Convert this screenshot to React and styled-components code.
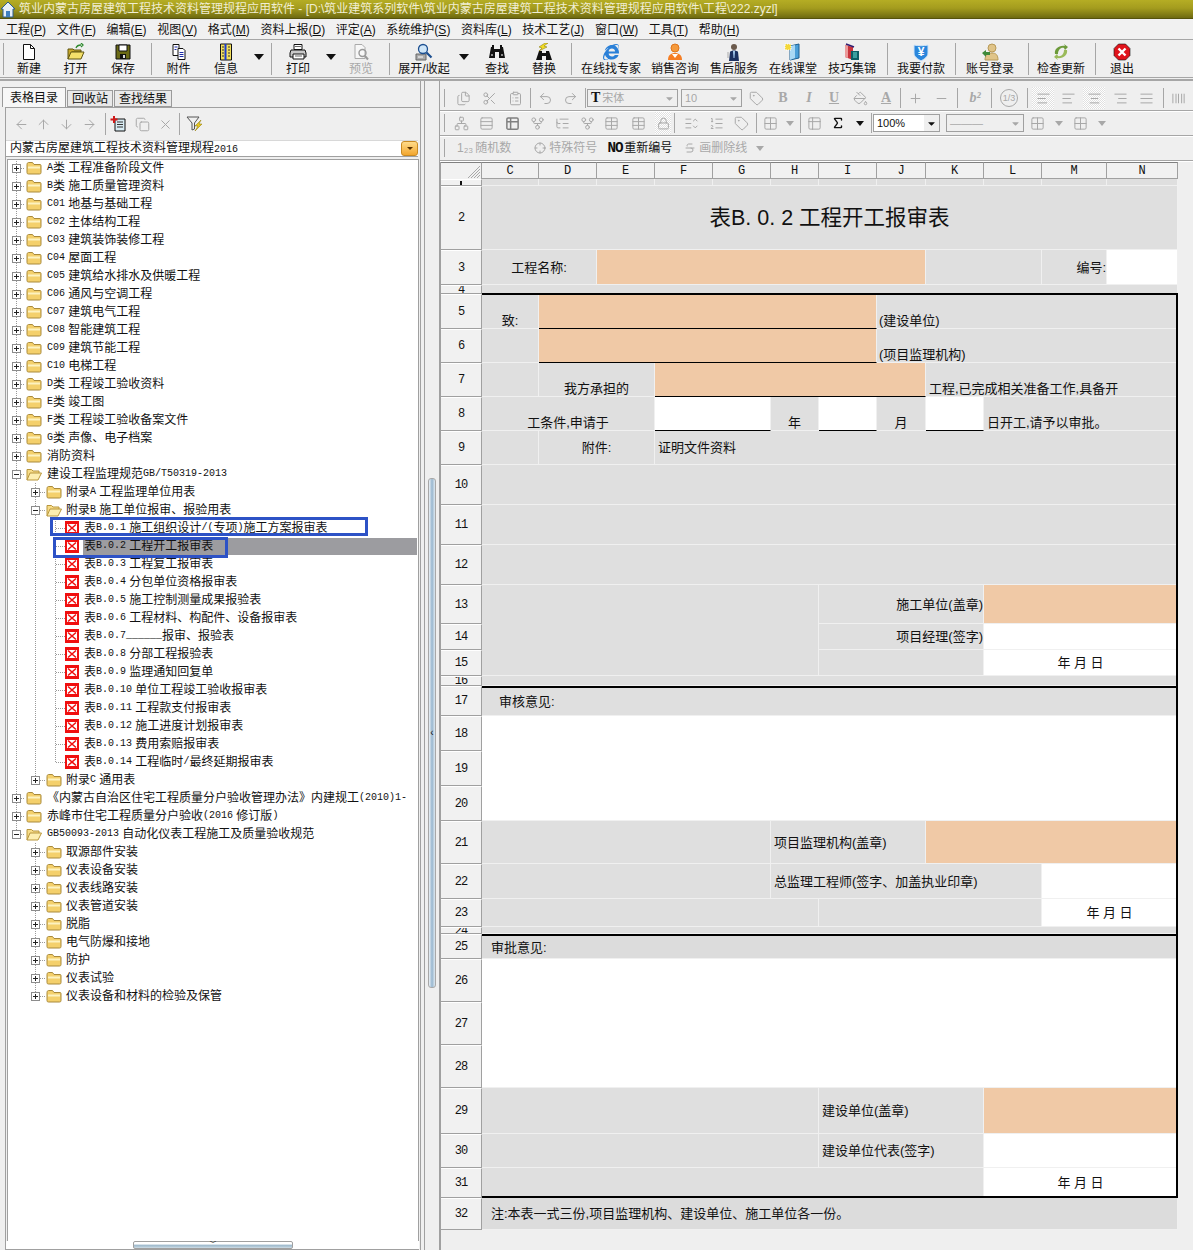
import React from "react";
import styled, { createGlobalStyle } from "styled-components";
import {
  Files, Scissors, ClipboardList, Undo2, Redo2, PaintBucket, Plus, Minus,
  AlignLeft, AlignCenter, AlignRight, AlignJustify, Barcode, Network, Rows3,
  Table2, GitFork, ListTree, Table, Lock, ListOrdered, ListChevronsUpDown, Tag,
  Sigma, Grid2x2, X, Copy, Filter, ArrowLeft, ArrowRight, ArrowUp, ArrowDown, Strikethrough,
  Crosshair,
} from "lucide-react";
import { FaInternetExplorer, FaCaretDown } from "react-icons/fa";

const FONT = '"Liberation Sans","Noto Sans CJK SC",sans-serif';
const MONO = '"Liberation Mono","Noto Sans CJK SC",monospace';

const GlobalStyle = createGlobalStyle`
  html, body { margin: 0; padding: 0; background: #efefef; }
  * { box-sizing: border-box; }
`;

/* ---------- window chrome ---------- */

const Page = styled.div`
  width: 1193px;
  height: 1250px;
  overflow: hidden;
  display: flex;
  flex-direction: column;
  background: #efefef;
  color: #111;
  font: 12px/14px ${FONT};
`;

const TitleBar = styled.div`
  height: 19px;
  flex: none;
  display: flex;
  align-items: center;
  gap: 3px;
  background: linear-gradient(#b5ad24, #a49c1e 45%, #6e6a10);
  border-bottom: 1px solid #55520c;
  color: #f1eed2;
  white-space: nowrap;
  overflow: hidden;
`;

const MenuBar = styled.div`
  height: 21px;
  flex: none;
  display: flex;
  align-items: center;
  gap: 10.6px;
  padding: 1px 0 0 6px;
  background: #f1f1f1;
  border-bottom: 1px solid #a6a6a6;
  white-space: nowrap;
  u { text-decoration: underline; }
`;

const MainToolbar = styled.div`
  height: 40px;
  flex: none;
  display: flex;
  padding-top: 3px;
  background: #efefef;
  border-bottom: 3px double #a6a6a6;
`;

const ToolButton = styled.div`
  width: ${(p) => p.$w}px;
  flex: none;
  display: flex;
  flex-direction: column;
  align-items: center;
  gap: 1px;
  white-space: nowrap;
  color: ${(p) => (p.$off ? "#a8a8a8" : "#111")};
`;

const IconBox = styled.span`
  height: 18px;
  display: flex;
  align-items: center;
  justify-content: center;
`;

const ToolSep = styled.span`
  width: ${(p) => p.$w}px;
  flex: none;
  height: ${(p) => p.$h || 32}px;
  background: linear-gradient(#a6a6a6, #a6a6a6) center / 1px 100% no-repeat;
`;

const Caret = styled.span`
  width: ${(p) => p.$w}px;
  flex: none;
  display: flex;
  align-items: center;
  justify-content: center;
  height: ${(p) => p.$h || 28}px;
  &::after {
    content: "";
    border: ${(p) => (p.$small ? 4 : 5)}px solid transparent;
    border-bottom: 0;
    border-top: ${(p) => (p.$small ? 5 : 6)}px solid ${(p) => (p.$off ? "#a8a8a8" : "#111")};
  }
`;

const Main = styled.div`
  flex: 1;
  display: flex;
  min-height: 0;
`;

/* ---------- left panel ---------- */

const LeftPanel = styled.div`
  width: 420px;
  flex: none;
  display: flex;
  flex-direction: column;
  padding-top: 7px;
  border-top: 1px solid #a6a6a6;
`;

const TabRow = styled.div`
  height: 19px;
  flex: none;
  display: flex;
  align-items: flex-end;
  padding-left: 2px;
  gap: 1px;
`;

const Tab = styled.div`
  height: ${(p) => (p.$active ? 20 : 17)}px;
  padding: 0 ${(p) => (p.$active ? 7 : 4)}px;
  display: flex;
  align-items: center;
  background: ${(p) => (p.$active ? "#f7f7f7" : "#e9e9e9")};
  border: 1px solid #9a9a9a;
  border-bottom: ${(p) => (p.$active ? "none" : "1px solid #9a9a9a")};
  position: relative;
  z-index: ${(p) => (p.$active ? 1 : 0)};
`;

const TabBody = styled.div`
  flex: 1;
  margin-left: 5px;
  display: flex;
  flex-direction: column;
  border: 1px solid #a0a0a0;
  border-bottom: none;
  border-right: none;
  min-height: 0;
`;

const TreeTools = styled.div`
  height: 32px;
  flex: none;
  display: flex;
  align-items: center;
  padding-left: 4px;
`;

const Combo = styled.div`
  height: 17px;
  flex: none;
  margin-right: 2px;
  display: flex;
  align-items: center;
  justify-content: space-between;
  padding-left: 4px;
  background: #fff;
  border-bottom: 1px solid #a0a0a0;
  border-top: 1px solid #d8d8d8;
`;

const ComboArrow = styled.span`
  width: 17px;
  height: 15px;
  display: flex;
  align-items: center;
  justify-content: center;
  border: 1px solid #c98a22;
  border-radius: 3px;
  background: linear-gradient(#ffdb8a, #f2a62e);
  &::after {
    content: "";
    border: 3px solid transparent;
    border-bottom: 0;
    border-top: 3px solid #5a3200;
  }
`;

const Tree = styled.div`
  position: relative;
  flex: 1;
  margin: 2px 1px 0 1px;
  background: #fff;
  border: 1px solid #a0a0a0;
  border-bottom: none;
  overflow: hidden;
  min-height: 0;
`;

const TreeList = styled.div`
  margin-top: -1px;
`;

const TreeRow = styled.div`
  height: 18px;
  display: flex;
  align-items: center;
  white-space: nowrap;
`;

const dotsV = "repeating-linear-gradient(to bottom,#9a9a9a 0 1px,transparent 1px 2px)";
const dotsH = "repeating-linear-gradient(to right,#9a9a9a 0 1px,transparent 1px 2px)";

const GuideSlot = styled.span`
  width: ${(p) => p.$w}px;
  height: 18px;
  flex: none;
  display: flex;
  align-items: center;
  justify-content: center;
  background-image: ${(p) => (p.$v ? dotsV : "none")}, ${(p) => (p.$h ? dotsH : "none")};
  background-repeat: no-repeat;
  background-size: 1px ${(p) => (p.$v === "top" ? "9px" : "100%")}, 50% 1px;
  background-position: center top, right center;
`;

const Expander = styled.span`
  width: 9px;
  height: 9px;
  flex: none;
  background-color: #fff;
  border: 1px solid #8c8c8c;
  background-image: linear-gradient(#222, #222),
    ${(p) => (p.$open ? "none" : "linear-gradient(#222, #222)")};
  background-repeat: no-repeat;
  background-size: 5px 1px, 1px 5px;
  background-position: center, center;
`;

const NodeIcon = styled.span`
  width: ${(p) => p.$w}px;
  flex: none;
  display: flex;
  align-items: center;
  padding-left: ${(p) => p.$pad || 0}px;
`;

const NodeLabel = styled.span`
  flex: 1;
  height: 17px;
  display: flex;
  align-items: center;
  padding-left: 1px;
  margin-right: ${(p) => (p.$selected ? 1 : 0)}px;
  min-width: 0;
  white-space: pre;
  background: ${(p) => (p.$selected ? "#9c9ca0" : "transparent")};
`;

const Latin = styled.span`
  font: 10px/14px ${MONO};
`;

const Annotation = styled.div`
  position: absolute;
  left: ${(p) => p.$x}px;
  top: ${(p) => p.$y}px;
  width: ${(p) => p.$w}px;
  height: ${(p) => p.$h}px;
  border: 3px solid #2d52c6;
`;

const HScroll = styled.div`
  height: 9px;
  flex: none;
  padding-left: 127px;
  border-bottom: 1px solid #a0a0a0;
  margin-right: 1px;
  background: #fff;
`;

const HThumb = styled.div`
  width: 160px;
  height: 8px;
  display: flex;
  justify-content: center;
  align-items: center;
  border: 1px solid #a0a0a0;
  border-radius: 2px;
  background: linear-gradient(#fff 30%, #9db9cc 60%, #cfdde6);
  color: #111;
  font-size: 8px;
  line-height: 6px;
`;

/* ---------- splitter ---------- */

const Splitter = styled.div`
  width: 20px;
  flex: none;
  display: flex;
  flex-direction: column;
  align-items: center;
  padding-top: 397px;
  border-top: 1px solid #a6a6a6;
  border-right: 1px solid #a0a0a0;
  background:
    linear-gradient(#a0a0a0, #a0a0a0) 0 0 / 1px 100% no-repeat,
    linear-gradient(#a0a0a0, #a0a0a0) 4px 0 / 1px 100% no-repeat;
  padding-left: 5px;
`;

const VThumb = styled.div`
  width: 8px;
  height: 510px;
  display: flex;
  align-items: center;
  justify-content: center;
  border: 1px solid #a8a8a8;
  border-radius: 3px;
  background: linear-gradient(to right, #eef3f7, #97b6cf 50%, #dfe9f0);
  font-size: 10px;
  line-height: 10px;
  color: #111;
`;

/* ---------- right panel ---------- */

const RightPanel = styled.div`
  flex: 1;
  min-width: 0;
  display: flex;
  flex-direction: column;
  padding-top: 5px;
  border-top: 1px solid #a6a6a6;
`;

const EditRow = styled.div`
  height: 25px;
  flex: none;
  display: flex;
  align-items: center;
  border-bottom: 1px solid #a6a6a6;
  box-shadow: 0 1px 0 #fff;
  color: #a8a8a8;
  white-space: nowrap;
`;

const Grip = styled.span`
  width: ${(p) => p.$w || 11}px;
  flex: none;
  height: 18px;
  margin-left: 0;
  background: linear-gradient(#a6a6a6, #a6a6a6) 4px 0 / 1px 100% no-repeat;
`;

const Slot = styled.span`
  width: ${(p) => p.$w}px;
  flex: none;
  display: flex;
  align-items: center;
  justify-content: center;
  color: ${(p) => p.$color || "#a8a8a8"};
`;

const Checked = styled.span`
  display: flex;
  align-items: center;
  justify-content: center;
  width: 22px;
  height: 22px;
  background: repeating-conic-gradient(#fff 0 25%, #e0e0e0 0 50%) 0 0 / 2px 2px;
`;

const GlyphText = styled.span`
  font: ${(p) => (p.$italic ? "italic " : "")}bold 14px/14px "Liberation Serif", serif;
  text-decoration: ${(p) => (p.$under ? "underline" : "none")};
  white-space: nowrap;
`;

const Fraction = styled.span`
  width: 18px;
  height: 18px;
  display: flex;
  align-items: center;
  justify-content: center;
  border: 1px solid #a8a8a8;
  border-radius: 50%;
  font: 9px/9px "Liberation Sans", sans-serif;
`;

const ComboBox = styled.span`
  width: ${(p) => p.$w}px;
  height: 18px;
  flex: none;
  margin-right: ${(p) => p.$mr || 0}px;
  display: flex;
  align-items: center;
  gap: 2px;
  padding-left: 3px;
  background: ${(p) => (p.$white ? "#fff" : "#efefef")};
  border: 1px solid #a0a0a0;
  color: ${(p) => (p.$white ? "#111" : "#a8a8a8")};
  font-size: 11px;
`;

const ComboDrop = styled.span`
  margin-left: auto;
  width: 15px;
  height: 100%;
  display: flex;
  align-items: center;
  justify-content: center;
  background: ${(p) => (p.$white ? "#efefef" : "transparent")};
`;

const TextTool = styled.span`
  display: flex;
  align-items: center;
  gap: ${(p) => p.$gap ?? 3}px;
  margin-left: ${(p) => p.$ml || 0}px;
  color: ${(p) => (p.$on ? "#111" : "#a8a8a8")};
`;

const NoMark = styled.span`
  font: bold 15px/15px "Liberation Mono", monospace;
  letter-spacing: -1px;
  color: #111;
  transform: scaleX(0.95);
`;

/* ---------- sheet ---------- */

const SheetArea = styled.div`
  flex: 1;
  border-left: 1px solid #a0a0a0;
  background: #efefef;
  margin-top: 1px;
  min-height: 0;
`;

const Sheet = styled.div`
  position: relative;
  display: grid;
  width: 737px;
  grid-template-columns: 41px 57px 58px 58px 58px 58px 48px 58px 49px 58px 58px 65px 71px;
  grid-template-rows:
    17px 7px 64px 35px 9px 35px 34px 34px 34px 34px 40px 40px 40px 39px 26px 26px 10px 30px
    35px 35px 35px 43px 35px 28px 7px 25px 43px 43px 43px 46px 34px 30px 32px;
`;

const Corner = styled.div`
  grid-column: 1;
  grid-row: 1;
  background: #f1f1f1;
  border-top: 1px solid #808080;
  border-right: 1px solid #a0a0a0;
  display: flex;
  justify-content: flex-end;
  align-items: flex-end;
`;

const ColHead = styled.div`
  grid-row: 1;
  grid-column: ${(p) => p.$col};
  display: flex;
  align-items: center;
  justify-content: center;
  background: #f1f1f1;
  border-top: 1px solid #808080;
  border-right: 1px solid #a0a0a0;
  border-bottom: 1px solid #a0a0a0;
  font: 12px/14px ${MONO};
`;

const RowHead = styled.div`
  grid-column: 1;
  grid-row: ${(p) => p.$row};
  display: flex;
  align-items: center;
  justify-content: center;
  overflow: hidden;
  background: #f1f1f1;
  border-top: 1px solid #fff;
  border-right: 1px solid #a0a0a0;
  border-bottom: 1px solid #a0a0a0;
  font: 12px/12px ${MONO};
  letter-spacing: -1px;
`;

const TONES = { gray: "#dfdfdf", dark: "#dcdcdc", peach: "#f0c9a6", white: "#fff" };
const JUSTIFY = { left: "flex-start", center: "center", right: "flex-end" };

const Cell = styled.div`
  grid-column: ${(p) => p.$from} / ${(p) => p.$to};
  grid-row: ${(p) => p.$row} / span ${(p) => p.$span || 1};
  display: flex;
  justify-content: ${(p) => JUSTIFY[p.$align || "left"]};
  align-items: ${(p) => (p.$bottom ? "flex-end" : "center")};
  padding: 0 0 ${(p) => (p.$bottom ? 0 : 0)}px ${(p) => p.$pad || 0}px;
  background: ${(p) => TONES[p.$tone || "gray"]};
  border-right: 1px solid #f0f0f0;
  border-bottom: 1px solid ${(p) => (p.$rule ? "#000" : "#f0f0f0")};
  border-top: ${(p) => (p.$topRule ? "2px solid #000" : "none")};
  font-size: 13px;
  line-height: 15px;
  white-space: nowrap;
  overflow: hidden;
`;

const FormTitle = styled.span`
  font-size: 21.5px;
  line-height: 26px;
`;

const FormFrame = styled.div`
  grid-column: 2 / 14;
  grid-row: 6 / 33;
  border-top: 2px solid #000;
  border-right: 2px solid #000;
  border-bottom: 2px solid #000;
  margin-top: -1px;
  pointer-events: none;
`;

const Tick = styled.span`
  width: 2px;
  height: 4px;
  background: #111;
`;

/* ---------- drawn icons ---------- */

const Svg = ({ size = 18, children }) => (
  <svg width={size} height={size} viewBox="0 0 18 18">{children}</svg>
);

const IconNew = () => (
  <Svg>
    <path d="M3.5 1.5h7l4 4v11h-11z" fill="#fff" stroke="#111" />
    <path d="M10.5 1.5v4h4" fill="none" stroke="#111" />
  </Svg>
);
const IconOpen = () => (
  <Svg>
    <path d="M1 16V6h5l1 1h7v2H5l-4 7z" fill="#c9a82a" stroke="#5f5510" />
    <path d="M1 16l3-7h13l-3 7z" fill="#f4e06a" stroke="#5f5510" />
    <path d="M9 5c1-3 3-3 5-3M14 0l2 2-2 2" fill="none" stroke="#2e8a2e" strokeWidth="1.3" />
  </Svg>
);
const IconSave = () => (
  <Svg>
    <path d="M2 2h14v14H2z" fill="#6b6a16" stroke="#111" />
    <path d="M5 2h8v6H5z" fill="#fff" stroke="#111" />
    <path d="M6 11h6v5H6z" fill="#111" />
    <path d="M9 12h2v3H9z" fill="#ddd" />
  </Svg>
);
const IconAttach = () => (
  <Svg>
    <path d="M3 1.5h6v11H3z" fill="#fff" stroke="#111" />
    <path d="M8 5.5h5l2 2v9H8z" fill="#fff" stroke="#111" />
    <path d="M4.5 4h3M4.5 6.5h2M9.5 9.5h4M9.5 11.5h4M9.5 13.5h4" stroke="#1a2aa8" />
  </Svg>
);
const IconInfo = () => (
  <Svg>
    <path d="M3.5 1h11v16h-11z" fill="#f2df5c" stroke="#111" />
    <path d="M8.5 1v16" stroke="#1c3cd0" strokeWidth="2" />
    <path d="M5 4h2M5 7h2M5 10h2M5 13h2M11 4h2M11 7h2M11 10h2M11 13h2" stroke="#333" />
  </Svg>
);
const IconPrint = () => (
  <Svg>
    <path d="M5 1.5h8v5H5z" fill="#fff" stroke="#111" />
    <path d="M2 7h14l1 3v4H1v-4z" fill="#c8c8c8" stroke="#111" />
    <path d="M4 11h11v5H4z" fill="#fff" stroke="#111" />
    <path d="M6 3.5h6M6 13h7" stroke="#666" />
  </Svg>
);
const IconPreview = () => (
  <Svg>
    <path d="M3 1.5h7l3 3v11H3z" fill="#f7f7f7" stroke="#aaa" />
    <circle cx="10.5" cy="10" r="3.5" fill="none" stroke="#999" strokeWidth="1.4" />
    <path d="M13 13l3 3.5" stroke="#999" strokeWidth="2" />
  </Svg>
);
const IconExpand = () => (
  <Svg>
    <path d="M1 11h10v6H1z" fill="#aaa" stroke="#666" />
    <path d="M3 14h5" stroke="#fff" />
    <circle cx="8" cy="6" r="4.5" fill="#cfe6f8" stroke="#1c4f90" strokeWidth="1.3" />
    <path d="M11.5 9.5l5 5" stroke="#1c4f90" strokeWidth="2.2" />
  </Svg>
);
const IconFind = () => (
  <Svg>
    <path d="M3 4h3v2h6V4h3l2 11h-6V9H7v6H1z" fill="#111" />
    <path d="M4 2h2v2H4zM12 2h2v2h-2z" fill="#111" />
    <path d="M3 11h2v2H3zM13 11h2v2h-2z" fill="#888" />
  </Svg>
);
const IconReplace = () => (
  <Svg>
    <path d="M4 8h3v2h4V8h3l3 9h-6v-4H7v4H1z" fill="#111" />
    <path d="M10 0L4 4l3 1-3 3 8-4-3-1 4-3z" fill="#f2dc22" stroke="#7c6e00" strokeWidth=".5" />
  </Svg>
);
const IconSales = () => (
  <Svg>
    <circle cx="9" cy="5" r="4" fill="#f59a3c" stroke="#e0761c" />
    <path d="M2 17c0-5 3-7 7-7s7 2 7 7z" fill="#f57e24" />
    <path d="M6 11l3 4 3-4z" fill="#fff" />
  </Svg>
);
const IconService = () => (
  <Svg>
    <circle cx="9" cy="4" r="3" fill="#6b5a4c" />
    <path d="M4 18l1-9c1-2 7-2 8 0l1 9z" fill="#1c3060" />
    <path d="M8 8h2l-.5 7h-1z" fill="#a8cdf0" />
    <path d="M2 9h2v6H2z" fill="#ccc" />
  </Svg>
);
const IconClass = () => (
  <Svg>
    <path d="M6 3l9-2v14l-9 2z" fill="#4b9fd8" stroke="#1c5f90" />
    <path d="M6 3l5-1v13l-5 2z" fill="#a9d8f4" />
    <path d="M1 1h6v6H1z" fill="#f4d83a" stroke="#fff" strokeDasharray="1 1" />
  </Svg>
);
const IconTips = () => (
  <Svg>
    <path d="M2 2l8 2v13l-8-3z" fill="#c8343c" />
    <path d="M2 2l3 .8V15l-3-1z" fill="#eb9a9a" />
    <path d="M8 8h8v9H8z" fill="#0f5f66" />
    <path d="M10 10h4M10 12h4M10 14h4" stroke="#6ce0d8" />
    <path d="M3 1l8 3" stroke="#301c70" strokeWidth="1.5" />
  </Svg>
);
const IconPay = () => (
  <Svg>
    <path d="M2 2c4 1 10 1 14 0v8c0 4-4 6-7 8-3-2-7-4-7-8z" fill="#2a86dc" stroke="#cfe4f8" />
    <text x="9" y="13" textAnchor="middle" fill="#fff" fontSize="12" fontWeight="700" fontFamily="Liberation Sans">¥</text>
  </Svg>
);
const IconAccount = () => (
  <Svg>
    <circle cx="11" cy="5" r="4" fill="#e0c488" stroke="#b89a58" />
    <path d="M4 17c0-5 3-7 7-7s6 2 6 7z" fill="#e0c488" stroke="#b89a58" />
    <path d="M1 10l4-3v2h4v3H5v2z" fill="#3f8a3a" />
  </Svg>
);
const IconUpdate = () => (
  <Svg>
    <path d="M3 11C2 6 7 2 13 3l-1-2 4 3-3 3-1-2C9 4 6 7 6 11z" fill="#6c9a3a" />
    <path d="M15 7c1 5-4 9-10 8l1 2-4-3 3-3 1 2c3 1 6-2 6-6z" fill="#9aba5a" />
  </Svg>
);
const IconExit = () => (
  <Svg>
    <path d="M5.5 1h7L17 5.5v7L12.5 17h-7L1 12.5v-7z" fill="#e0141c" stroke="#111" strokeWidth=".6" />
    <path d="M5.5 5.5l7 7M12.5 5.5l-7 7" stroke="#fff" strokeWidth="2.4" />
  </Svg>
);
const IconHouse = () => (
  <svg width="16" height="18" viewBox="0 0 16 18">
    <path d="M1 9l7-7 7 7-2 0v8H3V9z" fill="#e8f0f8" stroke="#2a5c90" />
    <path d="M6 11h4v6H6z" fill="#3f7fbf" />
  </svg>
);
const FolderClosed = () => (
  <svg width="16" height="14" viewBox="0 0 16 14">
    <path d="M1 3.5c0-1 .5-2 1.5-2h4l1.5 2h6c.6 0 1 .4 1 1v7c0 1-.5 1.500-1.500 1.500h-11C1.500 13 1 12.500 1 11.500z" fill="#f4d06c" stroke="#a98a3c" />
    <path d="M2 5.500h12v2H2z" fill="#fdf2c0" />
  </svg>
);
const FolderOpen = () => (
  <svg width="16" height="14" viewBox="0 0 16 14">
    <path d="M1 13V2.500h4.500l1.500 1.500h6v2.500" fill="#f7dc88" stroke="#b8963c" />
    <path d="M1 13l3-7h11.500L12 13z" fill="#fdeeb0" stroke="#b8963c" />
  </svg>
);
const LeafIcon = () => (
  <svg width="14" height="14" viewBox="0 0 14 14">
    <path d="M0 0h14v14H0z" fill="#f01010" />
    <path d="M2 3h10v8H2z" fill="#fff" />
    <path d="M3 3.500l8 7M11 3.500l-8 7" stroke="#f01010" strokeWidth="1.600" />
  </svg>
);
const CornerHatch = () => (
  <svg width="14" height="14" viewBox="0 0 14 14">
    <path d="M13 1L1 13M13 4L4 13M13 7l-6 6M13 10l-3 3" stroke="#a8a8a8" />
  </svg>
);
const NewSheetIcon = () => (
  <svg width="18" height="18" viewBox="0 0 18 18">
    <path d="M5 4h10v12H5z" fill="#d8ecf4" stroke="#111" />
    <path d="M7 7h6M7 9.500h6M7 12h6" stroke="#333" />
    <path d="M4 1v7M0.500 4.500h7" stroke="#d01818" strokeWidth="2" />
  </svg>
);
const FilterBolt = () => (
  <svg width="18" height="18" viewBox="0 0 18 18">
    <path d="M1 2h12L8.500 8v6L6 15V8z" fill="none" stroke="#555" />
    <path d="M15 5l-6 6h3l-3 5 7-7h-3z" fill="#e8c822" stroke="#8a7400" strokeWidth=".5" />
  </svg>
);

/* ---------- data ---------- */

const MENUS = [
  ["工程", "P"], ["文件", "F"], ["编辑", "E"], ["视图", "V"], ["格式", "M"], ["资料上报", "D"],
  ["评定", "A"], ["系统维护", "S"], ["资料库", "L"], ["技术工艺", "J"], ["窗口", "W"], ["工具", "T"], ["帮助", "H"],
];

const TOOLS = [
  { sep: 6, h: 32 },
  { w: 46, label: "新建", icon: <IconNew /> },
  { w: 47, label: "打开", icon: <IconOpen /> },
  { w: 48, label: "保存", icon: <IconSave /> },
  { sep: 8 },
  { w: 47, label: "附件", icon: <IconAttach /> },
  { w: 48, label: "信息", icon: <IconInfo /> },
  { caret: 18 },
  { sep: 6 },
  { w: 48, label: "打印", icon: <IconPrint /> },
  { caret: 18 },
  { w: 42, label: "预览", icon: <IconPreview />, off: true },
  { sep: 14 },
  { w: 56, label: "展开/收起", icon: <IconExpand /> },
  { caret: 24 },
  { w: 42, label: "查找", icon: <IconFind /> },
  { w: 52, label: "替换", icon: <IconReplace /> },
  { sep: 2 },
  { w: 78, label: "在线找专家", icon: <FaInternetExplorer size={16} color="#2a80d8" /> },
  { w: 50, label: "销售咨询", icon: <IconSales /> },
  { w: 68, label: "售后服务", icon: <IconService /> },
  { w: 50, label: "在线课堂", icon: <IconClass /> },
  { w: 68, label: "技巧集锦", icon: <IconTips /> },
  { sep: 2 },
  { w: 66, label: "我要付款", icon: <IconPay /> },
  { sep: 2 },
  { w: 68, label: "账号登录", icon: <IconAccount /> },
  { sep: 8 },
  { w: 58, label: "检查更新", icon: <IconUpdate /> },
  { sep: 10 },
  { w: 44, label: "退出", icon: <IconExit /> },
];

const L0 = (text, open) => ({ level: 0, text, open });
const L1 = (text, open, last) => ({ level: 1, text, open, last });
const LEAF = (text, last, selected) => ({ level: 2, text, last, selected });

const TREE = [
  L0("A类 工程准备阶段文件"), L0("B类 施工质量管理资料"), L0("C01 地基与基础工程"), L0("C02 主体结构工程"),
  L0("C03 建筑装饰装修工程"), L0("C04 屋面工程"), L0("C05 建筑给水排水及供暖工程"), L0("C06 通风与空调工程"),
  L0("C07 建筑电气工程"), L0("C08 智能建筑工程"), L0("C09 建筑节能工程"), L0("C10 电梯工程"),
  L0("D类 工程竣工验收资料"), L0("E类 竣工图"), L0("F类 工程竣工验收备案文件"), L0("G类 声像、电子档案"),
  L0("消防资料"), L0("建设工程监理规范GB/T50319-2013", true),
  L1("附录A 工程监理单位用表"), L1("附录B 施工单位报审、报验用表", true),
  LEAF("表B.0.1 施工组织设计/(专项)施工方案报审表"), LEAF("表B.0.2 工程开工报审表", false, true),
  LEAF("表B.0.3 工程复工报审表"), LEAF("表B.0.4 分包单位资格报审表"), LEAF("表B.0.5 施工控制测量成果报验表"),
  LEAF("表B.0.6 工程材料、构配件、设备报审表"), LEAF("表B.0.7 ______报审、报验表"), LEAF("表B.0.8 分部工程报验表"),
  LEAF("表B.0.9 监理通知回复单"), LEAF("表B.0.10 单位工程竣工验收报审表"), LEAF("表B.0.11 工程款支付报审表"),
  LEAF("表B.0.12 施工进度计划报审表"), LEAF("表B.0.13 费用索赔报审表"), LEAF("表B.0.14 工程临时/最终延期报审表", true),
  L1("附录C 通用表", false, true),
  L0("《内蒙古自治区住宅工程质量分户验收管理办法》内建规工(2010)1-"),
  L0("赤峰市住宅工程质量分户验收(2016 修订版)"),
  { ...L0("GB50093-2013 自动化仪表工程施工及质量验收规范", true), tail: true },
  ...["取源部件安装", "仪表设备安装", "仪表线路安装", "仪表管道安装", "脱脂", "电气防爆和接地", "防护", "仪表试验"].map(
    (t) => ({ ...L1(t), orphan: true })
  ),
  { ...L1("仪表设备和材料的检验及保管", false, true), orphan: true },
];

const COLS = [["C", 2], ["D", 3], ["E", 4], ["F", 5], ["G", 6], ["H", 7], ["I", 8], ["J", 9], ["K", 10], ["L", 11], ["M", 12], ["N", 13]];
const ROW_NUMBERS = Array.from({ length: 32 }, (_, i) => i + 1);
const DATE = "年 月 日";

// n = sheet row, from/to = grid column lines (C=2 ... N=13, end=14)
const CELLS = [
  ...COLS.map(([, c]) => ({ n: 1, from: c, to: c + 1 })),
  { n: 2, from: 2, to: 14, align: "center", title: "表B. 0. 2 工程开工报审表" },
  { n: 3, from: 2, to: 4, align: "center", text: "工程名称:" },
  { n: 3, from: 4, to: 10, tone: "peach" },
  { n: 3, from: 10, to: 12 },
  { n: 3, from: 12, to: 13, align: "right", text: "编号:" },
  { n: 3, from: 13, to: 14, tone: "white" },
  { n: 4, from: 2, to: 14 },
  { n: 5, from: 2, to: 3, align: "center", bottom: true, text: "致:" },
  { n: 5, from: 3, to: 9, tone: "peach", rule: true },
  { n: 5, from: 9, to: 14, bottom: true, pad: 2, text: "(建设单位)" },
  { n: 6, from: 2, to: 3 },
  { n: 6, from: 3, to: 9, tone: "peach", rule: true },
  { n: 6, from: 9, to: 14, bottom: true, pad: 2, text: "(项目监理机构)" },
  { n: 7, from: 2, to: 3 },
  { n: 7, from: 3, to: 5, align: "center", bottom: true, text: "我方承担的" },
  { n: 7, from: 5, to: 10, tone: "peach", rule: true },
  { n: 7, from: 10, to: 14, bottom: true, pad: 3, text: "工程,已完成相关准备工作,具备开" },
  { n: 8, from: 2, to: 5, align: "center", bottom: true, text: "工条件,申请于" },
  { n: 8, from: 5, to: 7, tone: "white", rule: true },
  { n: 8, from: 7, to: 8, align: "center", bottom: true, text: "年" },
  { n: 8, from: 8, to: 9, tone: "white", rule: true },
  { n: 8, from: 9, to: 10, align: "center", bottom: true, text: "月" },
  { n: 8, from: 10, to: 11, tone: "white", rule: true },
  { n: 8, from: 11, to: 14, bottom: true, pad: 3, text: "日开工,请予以审批。" },
  { n: 9, from: 2, to: 3 },
  { n: 9, from: 3, to: 5, align: "center", text: "附件:" },
  { n: 9, from: 5, to: 14, pad: 3, text: "证明文件资料" },
  { n: 10, from: 2, to: 14 },
  { n: 11, from: 2, to: 14 },
  { n: 12, from: 2, to: 14 },
  { n: 13, span: 3, from: 2, to: 8 },
  { n: 13, from: 8, to: 11, align: "right", text: "施工单位(盖章)" },
  { n: 13, from: 11, to: 14, tone: "peach" },
  { n: 14, from: 8, to: 11, align: "right", text: "项目经理(签字)" },
  { n: 14, from: 11, to: 14, tone: "white" },
  { n: 15, from: 8, to: 11 },
  { n: 15, from: 11, to: 14, tone: "white", align: "center", text: DATE },
  { n: 16, from: 2, to: 14 },
  { n: 17, from: 2, to: 14, pad: 17, topRule: true, text: "审核意见:" },
  { n: 18, span: 3, from: 2, to: 14, tone: "white" },
  { n: 21, from: 2, to: 7 },
  { n: 21, from: 7, to: 10, pad: 3, text: "项目监理机构(盖章)" },
  { n: 21, from: 10, to: 14, tone: "peach" },
  { n: 22, from: 2, to: 7 },
  { n: 22, from: 7, to: 12, pad: 3, text: "总监理工程师(签字、加盖执业印章)" },
  { n: 22, from: 12, to: 14, tone: "white" },
  { n: 23, from: 2, to: 8 },
  { n: 23, from: 8, to: 12 },
  { n: 23, from: 12, to: 14, tone: "white", align: "center", text: DATE },
  { n: 24, from: 2, to: 14 },
  { n: 25, from: 2, to: 14, pad: 9, tone: "dark", topRule: true, text: "审批意见:" },
  { n: 26, span: 3, from: 2, to: 14, tone: "white" },
  { n: 29, from: 2, to: 8 },
  { n: 29, from: 8, to: 11, pad: 3, text: "建设单位(盖章)" },
  { n: 29, from: 11, to: 14, tone: "peach" },
  { n: 30, from: 2, to: 8 },
  { n: 30, from: 8, to: 11, pad: 3, text: "建设单位代表(签字)" },
  { n: 30, from: 11, to: 14, tone: "white" },
  { n: 31, from: 2, to: 11 },
  { n: 31, from: 11, to: 14, tone: "white", align: "center", text: DATE },
  { n: 32, from: 2, to: 14, pad: 9, tone: "dark", text: "注:本表一式三份,项目监理机构、建设单位、施工单位各一份。" },
];

/* ---------- pieces ---------- */

// latin runs in the tree are the half-width bitmap look, so they get the mono face
function Mixed({ text }) {
  return text.split(/([\x21-\x7e]+(?: (?=\d))?)/).map((part, i) =>
    i % 2 ? <Latin key={i}>{part}</Latin> : <React.Fragment key={i}>{part}</React.Fragment>
  );
}

function TreeNode({ node }) {
  const { level, text, open, last, selected, orphan, tail } = node;
  const folder = open ? <FolderOpen /> : <FolderClosed />;
  return (
    <TreeRow>
      <GuideSlot $w={17} $v={level === 0 ? (tail ? "top" : true) : orphan ? false : true} $h={level === 0}>
        {level === 0 && <Expander $open={open} />}
      </GuideSlot>
      {level === 0 && <NodeIcon $w={21} $pad={1}>{folder}</NodeIcon>}
      {level > 0 && (
        <GuideSlot $w={21} $v={level === 1 && last ? "top" : true} $h={level === 1}>
          {level === 1 && <Expander $open={open} />}
        </GuideSlot>
      )}
      {level === 1 && <NodeIcon $w={19}>{folder}</NodeIcon>}
      {level === 2 && <GuideSlot $w={19} $v={last ? "top" : true} $h />}
      {level === 2 && <NodeIcon $w={18}><LeafIcon /></NodeIcon>}
      <NodeLabel $selected={selected}><Mixed text={text} /></NodeLabel>
    </TreeRow>
  );
}

function FormCell({ cell }) {
  const { n, span, from, to, tone, align, bottom, pad, rule, topRule, text, title } = cell;
  return (
    <Cell
      $row={n + 1}
      $span={span}
      $from={from}
      $to={to}
      $tone={tone}
      $align={align}
      $bottom={bottom}
      $pad={pad}
      $rule={rule}
      $topRule={topRule}
    >
      {title ? <FormTitle>{title}</FormTitle> : text}
    </Cell>
  );
}

const S = 15;
const ico = (Icon, w, extra) => (
  <Slot $w={w} {...extra}>
    <Icon size={S} strokeWidth={1.6} />
  </Slot>
);

export default function App() {
  return (
    <Page>
      <GlobalStyle />
      <TitleBar>
        <IconHouse />
        筑业内蒙古房屋建筑工程技术资料管理规程应用软件 - [D:\筑业建筑系列软件\筑业内蒙古房屋建筑工程技术资料管理规程应用软件\工程\222.zyzl]
      </TitleBar>

      <MenuBar>
        {MENUS.map(([name, key]) => (
          <span key={key}>
            {name}(<u>{key}</u>)
          </span>
        ))}
      </MenuBar>

      <MainToolbar>
        {TOOLS.map((t, i) => {
          if (t.sep) return <ToolSep key={i} $w={t.sep} />;
          if (t.caret) return <Caret key={i} $w={t.caret} />;
          return (
            <ToolButton key={i} $w={t.w} $off={t.off}>
              <IconBox>{t.icon}</IconBox>
              {t.label}
            </ToolButton>
          );
        })}
      </MainToolbar>

      <Main>
        <LeftPanel>
          <TabRow>
            <Tab $active>表格目录</Tab>
            <Tab>回收站</Tab>
            <Tab>查找结果</Tab>
          </TabRow>
          <TabBody>
            <TreeTools>
              {ico(ArrowLeft, 22)}
              {ico(ArrowUp, 23)}
              {ico(ArrowDown, 23)}
              {ico(ArrowRight, 23)}
              <ToolSep $w={8} $h={22} />
              <Slot $w={20}><NewSheetIcon /></Slot>
              {ico(Copy, 26)}
              {ico(X, 20)}
              <ToolSep $w={8} $h={22} />
              <Slot $w={24}><FilterBolt /></Slot>
            </TreeTools>
            <Combo>
              <span><Mixed text="内蒙古房屋建筑工程技术资料管理规程2016" /></span>
              <ComboArrow />
            </Combo>
            <Tree>
              <TreeList>
                {TREE.map((node, i) => <TreeNode key={i} node={node} />)}
              </TreeList>
              <Annotation $x={42} $y={357} $w={318} $h={19} />
              <Annotation $x={45} $y={377} $w={175} $h={21} />
            </Tree>
            <HScroll>
              <HThumb>﹀</HThumb>
            </HScroll>
          </TabBody>
        </LeftPanel>

        <Splitter>
          <VThumb>‹</VThumb>
        </Splitter>

        <RightPanel>
          <EditRow>
            <Grip />
            {ico(Files, 24)}
            {ico(Scissors, 28)}
            {ico(ClipboardList, 24)}
            <ToolSep $w={6} $h={20} />
            {ico(Undo2, 24)}
            {ico(Redo2, 26)}
            <ToolSep $w={4} $h={20} />
            <ComboBox $w={91} $mr={3}>
              <GlyphText style={{ color: "#111" }}>T</GlyphText>宋体
              <ComboDrop><FaCaretDown size={11} /></ComboDrop>
            </ComboBox>
            <ComboBox $w={61}>
              10
              <ComboDrop><FaCaretDown size={11} /></ComboDrop>
            </ComboBox>
            {ico(Tag, 28)}
            <Slot $w={26}><GlyphText>B</GlyphText></Slot>
            <Slot $w={26}><GlyphText $italic>I</GlyphText></Slot>
            <Slot $w={24}><GlyphText $under>U</GlyphText></Slot>
            {ico(PaintBucket, 28)}
            <Slot $w={24}><GlyphText $under>A</GlyphText></Slot>
            <ToolSep $w={4} $h={20} />
            {ico(Plus, 26)}
            {ico(Minus, 26)}
            <ToolSep $w={6} $h={20} />
            <Slot $w={30}><GlyphText $italic>b²</GlyphText></Slot>
            <ToolSep $w={2} $h={20} />
            <Slot $w={34}><Fraction>1/3</Fraction></Slot>
            <ToolSep $w={2} $h={20} />
            <Slot $w={30}><Checked><AlignLeft size={S} strokeWidth={1.6} /></Checked></Slot>
            {ico(AlignLeft, 20)}
            <Slot $w={32}><Checked><AlignCenter size={S} strokeWidth={1.6} /></Checked></Slot>
            {ico(AlignRight, 20)}
            {ico(AlignJustify, 32)}
            <ToolSep $w={2} $h={20} />
            {ico(Barcode, 28)}
          </EditRow>

          <EditRow>
            <Grip />
            {ico(Network, 20)}
            {ico(Rows3, 30)}
            <Slot $w={22} $color="#808080"><Table2 size={S} strokeWidth={2.4} /></Slot>
            {ico(GitFork, 28)}
            {ico(ListTree, 22)}
            {ico(GitFork, 28)}
            {ico(Table, 20)}
            {ico(Table, 34)}
            <Slot $w={16}><Checked><Lock size={13} strokeWidth={1.8} /></Checked></Slot>
            <ToolSep $w={6} $h={20} />
            {ico(ListChevronsUpDown, 28)}
            {ico(ListOrdered, 22)}
            {ico(Tag, 28)}
            <ToolSep $w={2} $h={20} />
            {ico(Grid2x2, 26)}
            <Caret $w={14} $h={20} $small $off />
            <ToolSep $w={6} $h={20} />
            {ico(Table2, 22)}
            <Slot $w={26} $color="#111"><Sigma size={14} strokeWidth={2.4} /></Slot>
            <Caret $w={18} $h={20} $small />
            <ToolSep $w={4} $h={20} />
            <ComboBox $w={67} $white $mr={6}>
              100%
              <ComboDrop $white><FaCaretDown size={11} color="#111" /></ComboDrop>
            </ComboBox>
            <ComboBox $w={78}>
              ———
              <ComboDrop><FaCaretDown size={11} /></ComboDrop>
            </ComboBox>
            {ico(Grid2x2, 26)}
            <Caret $w={18} $h={20} $small $off />
            {ico(Grid2x2, 24)}
            <Caret $w={20} $h={20} $small $off />
          </EditRow>

          <EditRow>
            <Grip />
            <TextTool $ml={6} $gap={2}>
              <span>1₂₃</span>随机数
            </TextTool>
            <TextTool $ml={23}>
              <Crosshair size={12} />特殊符号
            </TextTool>
            <TextTool $ml={10} $on $gap={1}>
              <NoMark>NO</NoMark>重新编号
            </TextTool>
            <TextTool $ml={12}>
              <Strikethrough size={12} />画删除线
            </TextTool>
            <Caret $w={26} $h={20} $small $off />
          </EditRow>

          <SheetArea>
            <Sheet>
              <Corner><CornerHatch /></Corner>
              {COLS.map(([name, col]) => <ColHead key={name} $col={col}>{name}</ColHead>)}
              {ROW_NUMBERS.map((n) => (
                <RowHead key={n} $row={n + 1}>{n === 1 ? <Tick /> : n}</RowHead>
              ))}
              {CELLS.map((cell, i) => <FormCell key={i} cell={cell} />)}
              <FormFrame />
            </Sheet>
          </SheetArea>
        </RightPanel>
      </Main>
    </Page>
  );
}
